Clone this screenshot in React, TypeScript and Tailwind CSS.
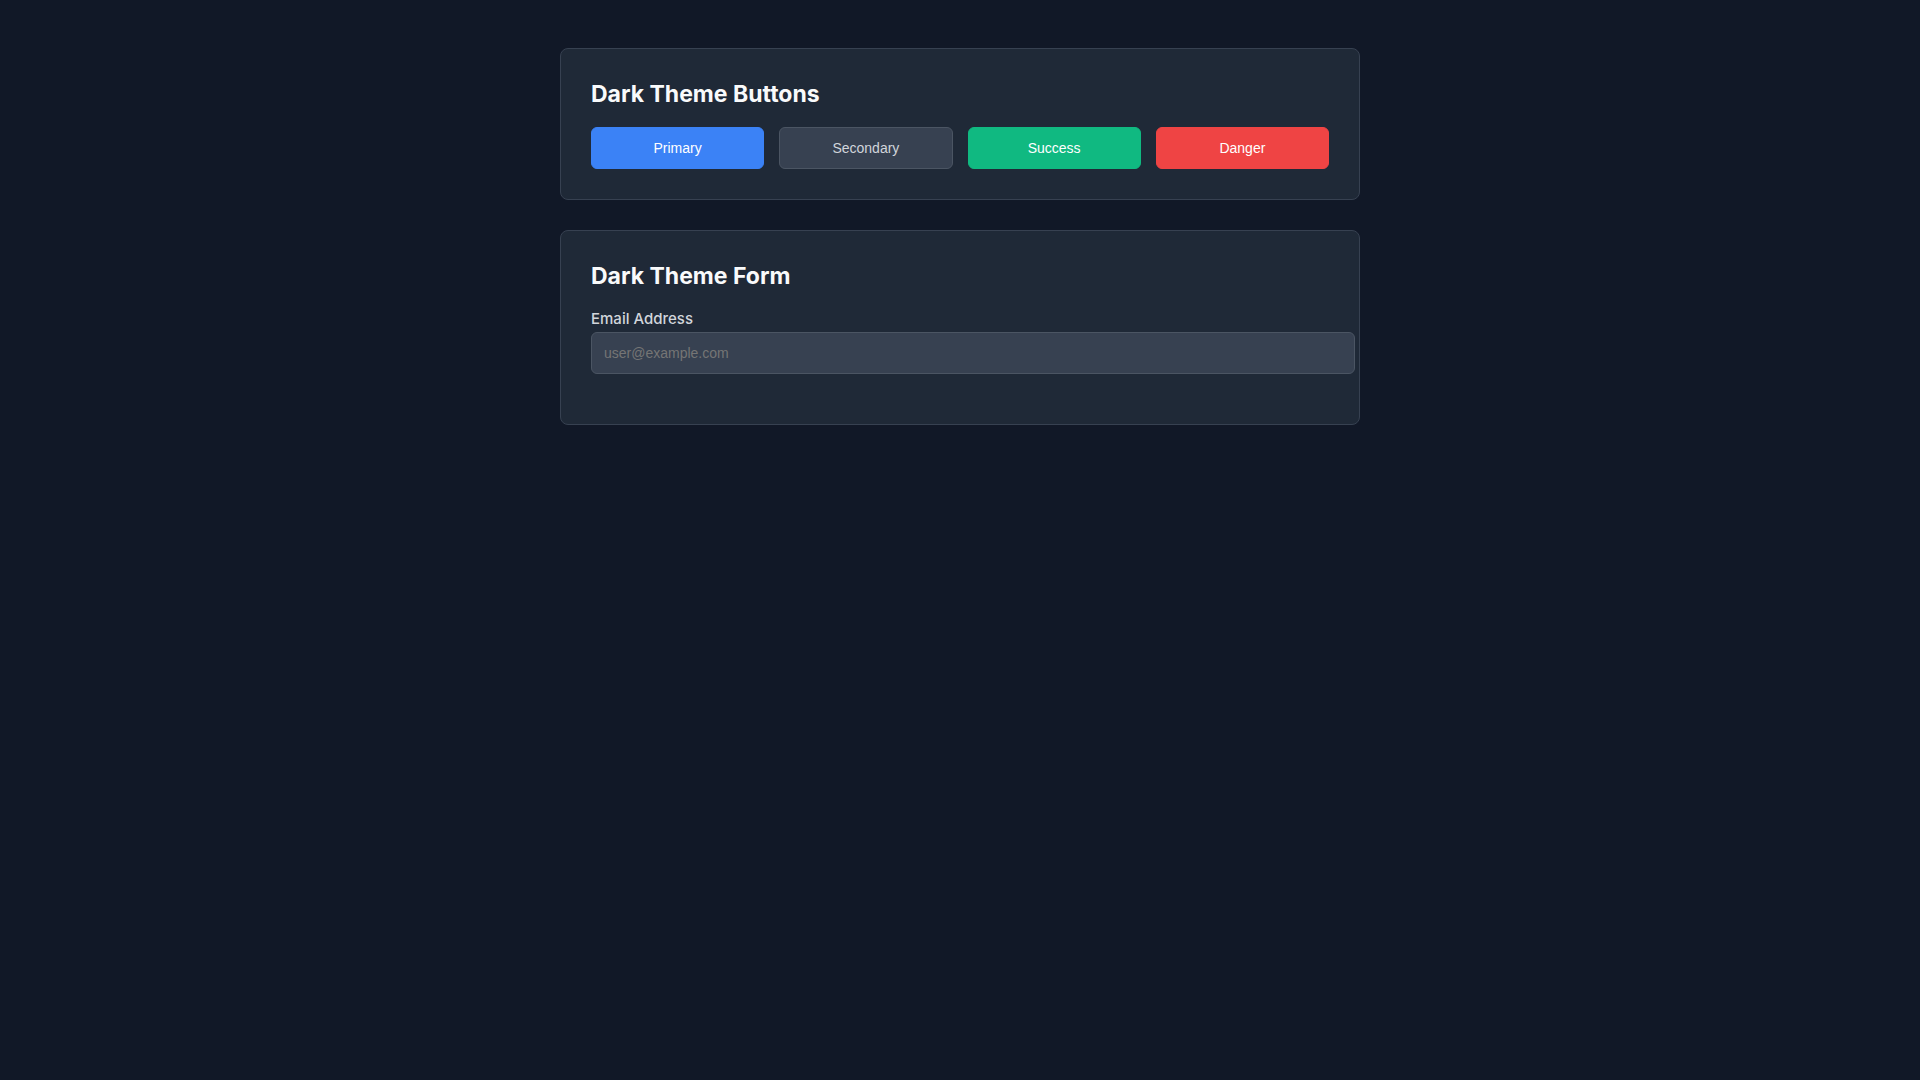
import React from "react";

const buttons = [
  { label: "Primary", style: "bg-[#3b82f6] border-[#3b82f6] text-white" },
  { label: "Secondary", style: "bg-[#374151] border-[#4b5563] text-[#d1d5db]" },
  { label: "Success", style: "bg-[#10b981] border-[#10b981] text-white" },
  { label: "Danger", style: "bg-[#ef4444] border-[#ef4444] text-white" },
];

function Card({ title, children }: { title: string; children: React.ReactNode }) {
  return (
    <section className="mb-[30px] rounded-lg border border-[#374151] bg-[#1f2937] p-[30px]">
      <h2 className="mb-[18px] text-[23px] leading-[30px] font-bold text-[#f9fafb]">{title}</h2>
      {children}
    </section>
  );
}

export default function App() {
  return (
    <main className="min-h-screen bg-[#111827] pt-12 font-['Inter',sans-serif] text-[#d1d5db]">
      <div className="mx-auto max-w-[800px]">
        <Card title="Dark Theme Buttons">
          <div className="grid grid-cols-4 gap-[15px]">
            {buttons.map((b) => (
              <button
                key={b.label}
                type="button"
                className={`rounded-md border py-3 font-['Liberation_Sans',sans-serif] text-sm leading-4 ${b.style}`}
              >
                {b.label}
              </button>
            ))}
          </div>
        </Card>
        <Card title="Dark Theme Form">
          <div className="mb-5">
            <label htmlFor="email" className="mb-[3px] block text-[15px] leading-5 font-medium">
              Email Address
            </label>
            <input
              id="email"
              type="email"
              placeholder="user@example.com"
              className="box-content block w-full rounded-md border border-[#4b5563] bg-[#374151] px-3 py-3 font-['Liberation_Sans',sans-serif] text-sm leading-4 text-[#f9fafb] placeholder:text-[#757575]"
            />
          </div>
        </Card>
      </div>
    </main>
  );
}
